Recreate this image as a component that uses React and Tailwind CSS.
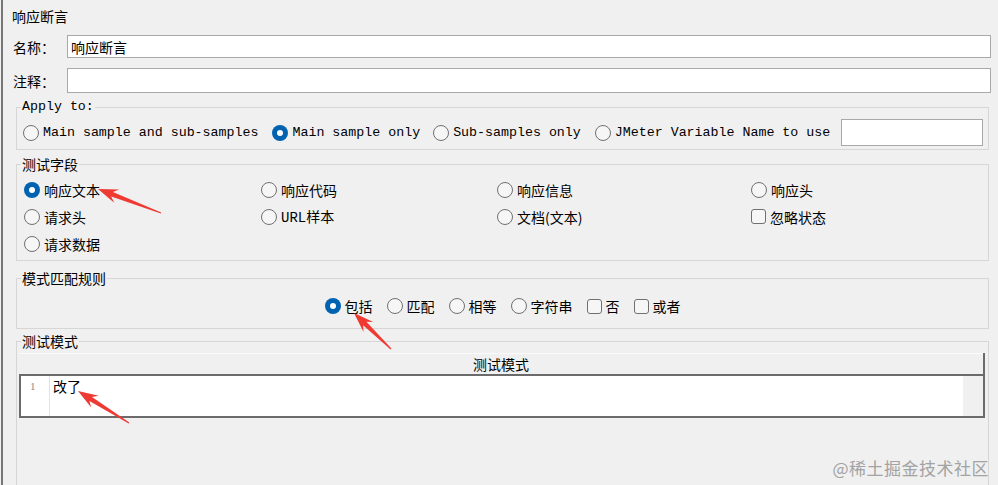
import React from "react";

const cjk = "font-['Noto_Sans_CJK_SC','Noto_Sans',sans-serif]";
const mono = "font-['Liberation_Mono','Noto_Sans_CJK_SC',monospace]";

function Radio({ checked }) {
  if (checked) {
    return (
      <span className="w-[16px] h-[16px] rounded-full bg-[#0063b1] flex items-center justify-center shrink-0">
        <span className="w-[6px] h-[6px] rounded-full bg-white" />
      </span>
    );
  }
  return <span className="w-[16px] h-[16px] rounded-full border border-[#707070] bg-[#f6f6f6] shrink-0" />;
}

function Check() {
  return <span className="w-[15px] h-[15px] rounded-[3px] border border-[#707070] bg-[#f6f6f6] shrink-0" />;
}

function Option({ checked, box, label, className = "" }) {
  return (
    <span className={`flex items-center gap-[4px] ${className}`}>
      {box ? <Check /> : <Radio checked={checked} />}
      <span>{label}</span>
    </span>
  );
}

function Group({ title, legendClass = "", className = "", children }) {
  return (
    <fieldset className={`block border border-[#d6d6d6] ml-[13px] mr-[9px] ${className}`}>
      <legend className={`ml-[4px] px-[1px] leading-[18px] ${legendClass}`}>{title}</legend>
      {children}
    </fieldset>
  );
}

// Red annotation arrow, tapered shaft with a barbed head
function arrowPoints([x1, y1], [x2, y2]) {
  const dx = x2 - x1;
  const dy = y2 - y1;
  const len = Math.hypot(dx, dy);
  const ux = dx / len;
  const uy = dy / len;
  const nx = -uy;
  const ny = ux;
  const head = 20;
  const neck = 15;
  const bx = x2 - ux * head;
  const by = y2 - uy * head;
  const kx = x2 - ux * neck;
  const ky = y2 - uy * neck;
  const pts = [
    [x1 + nx * 0.6, y1 + ny * 0.6],
    [kx + nx * 2.4, ky + ny * 2.4],
    [bx + nx * 7, by + ny * 7],
    [x2, y2],
    [bx - nx * 7, by - ny * 7],
    [kx - nx * 2.4, ky - ny * 2.4],
    [x1 - nx * 0.6, y1 - ny * 0.6],
  ];
  return pts.map((p) => p.map((v) => v.toFixed(1)).join(",")).join(" ");
}

const arrows = [
  [[161, 213], [98, 189]],
  [[391, 349], [354, 313]],
  [[129, 423], [78, 391]],
];

export default function App() {
  return (
    <div className={`relative w-[998px] h-[485px] overflow-hidden bg-[#f0f0f0] text-[14px] text-black flex ${cjk}`}>
      <div className="w-px shrink-0" />
      <div className="w-[2px] shrink-0 bg-[#777777]" />
      <div className="flex-1 min-w-0">
        <div className="pl-[9px] pt-[6px] leading-[20px]">响应断言</div>

        <div className="flex items-center mt-[9px] h-[23px]">
          <span className="w-[64px] pl-[10px] shrink-0 leading-[20px]">名称：</span>
          <div className="flex-1 mr-[7px] h-full bg-white border border-[#a9a9a9] pl-[3px] flex items-center leading-[20px]">
            响应断言
          </div>
        </div>

        <div className="flex items-center mt-[10px] h-[25px]">
          <span className="w-[64px] pl-[10px] shrink-0 leading-[20px]">注释：</span>
          <div className="flex-1 mr-[7px] h-full bg-white border border-[#a9a9a9]" />
        </div>

        <Group title="Apply to:" legendClass={`${mono} text-[13.3px]`} className="mt-[5px]">
          <div className={`flex items-center h-[27px] mt-[3px] mb-[3px] pl-[6px] ${mono} text-[13.3px]`}>
            <Option label="Main sample and sub-samples" />
            <Option checked label="Main sample only" className="ml-[14px]" />
            <Option label="Sub-samples only" className="ml-[13px]" />
            <Option label="JMeter Variable Name to use" className="ml-[14px]" />
            <div className="ml-[11px] w-[142px] h-[27px] bg-white border border-[#a9a9a9]" />
          </div>
        </Group>

        <Group title="测试字段" className="mt-[5px]">
          <div className="grid grid-cols-[237px_236px_254px_1fr] leading-[20px] pl-[7px] pt-[3px] pb-[3px]">
            <Option checked label="响应文本" className="h-[27px]" />
            <Option label="响应代码" className="h-[27px]" />
            <Option label="响应信息" className="h-[27px]" />
            <Option label="响应头" className="h-[27px]" />
            <Option label="请求头" className="h-[27px]" />
            <Option label={<><span className={mono}>URL</span>样本</>} className="h-[27px]" />
            <Option label="文档(文本)" className="h-[27px]" />
            <Option box label="忽略状态" className="h-[27px]" />
            <Option label="请求数据" className="h-[27px]" />
          </div>
        </Group>

        <Group title="模式匹配规则" className="mt-[8px]">
          <div className="flex items-center justify-center h-[28px] mt-[5px] mb-[8px] gap-[14px] leading-[20px]">
            <Option checked label="包括" />
            <Option label="匹配" />
            <Option label="相等" />
            <Option label="字符串" />
            <Option box label="否" />
            <Option box label="或者" />
          </div>
        </Group>

        <Group title="测试模式" className="mt-[3px] h-[200px]">
          <div className="mt-[3px] ml-[2px] mr-[3px] border-r-2 border-[#6b6b6b]">
            <div className="h-[23px] border-t border-t-[#fbfbfb] border-b-2 border-b-[#6b6b6b] flex items-center justify-center leading-[20px]">
              测试模式
            </div>
            <div className="h-[42px] flex bg-white border-l-2 border-b-2 border-[#6b6b6b]">
              <div className="w-[29px] border-r border-[#e3e3e3] pl-[9px] text-[11px] leading-[20px] text-[#8a8a8a] font-['Liberation_Serif',serif]">
                1
              </div>
              <div className="flex-1 pl-[3px] leading-[20px]">改了</div>
              <div className="w-[20px] bg-[#f0f0f0]" />
            </div>
          </div>
        </Group>
      </div>

      <div className="absolute right-[9px] top-[456px] text-[17px] leading-[24px] text-[#a3a3a3] tracking-[0.5px]">
        @稀土掘金技术社区
      </div>

      <svg className="absolute inset-0 pointer-events-none" width="998" height="485" viewBox="0 0 998 485">
        {arrows.map(([tail, tip], i) => (
          <polygon key={i} points={arrowPoints(tail, tip)} fill="#ef3a33" />
        ))}
      </svg>
    </div>
  );
}
